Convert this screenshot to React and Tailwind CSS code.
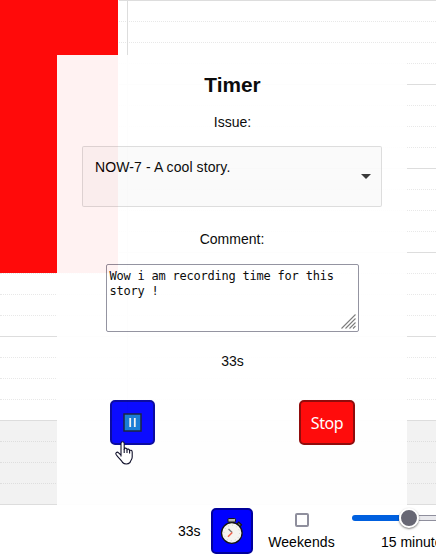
const quarterHours = Array.from({ length: 24 }, (_, i) => i);

function Calendar() {
  return (
    <div className="relative h-[505px] shrink-0 bg-white">
      {quarterHours.map((i) => (
        <div
          key={i}
          className={`h-[21px] border-t ${i % 4 === 0 ? "border-solid border-[#dddddd]" : i > 20 ? "border-dotted border-[#dedede]" : "border-dotted border-[#e8e8e8]"} ${i >= 20 ? "bg-[#f2f2f2]" : ""}`}
        />
      ))}
      <div className="h-px bg-[#dddddd]" />
      <div className="absolute top-0 left-[127px] h-[420px] w-px bg-[#dddddd]" />
      <div className="absolute top-0 left-0 h-[273px] w-[119px] border-r border-white bg-[#ff0a0a]" />
    </div>
  );
}

function Hand() {
  return (
    <svg className="absolute top-[440px] left-[114px]" width="20" height="26" viewBox="0 0 20 26">
      <path
        d="M7 16.5V3.5C7 1.1 10.2 1.1 10.2 3.5V9.2C10.5 7.6 13 7.8 13 9.8C13.4 8.5 15.6 8.9 15.6 10.8C16.2 9.8 18.2 10.2 18.2 12V17C18.2 19.5 16.6 20.3 16 22.5C14 24.4 10.5 24.4 8.6 22.5C7.8 20.5 4.2 18 2.1 14.5C1 12.5 3.2 11.5 4.6 12.8L7 15.2"
        fill="white"
        stroke="#10102a"
        strokeWidth="1.1"
        strokeLinejoin="round"
      />
      <path d="M10.2 9V13M13 10V13M15.6 11V13.5" stroke="#10102a" strokeWidth="1.1" />
    </svg>
  );
}

function TimerDialog() {
  return (
    <div className="absolute top-[55px] left-[57px] flex h-[450px] w-[350px] flex-col items-center bg-white text-black opacity-95">
      <h1 className="mt-[17px] ml-px text-[20.8px] leading-[26px] font-bold">Timer</h1>
      <div className="mt-[15px] ml-px text-sm leading-[18px]">Issue:</div>
      <div className="mt-[15px] flex h-[61px] w-[300px] justify-between rounded-[2px] border border-black/12 bg-black/2 pt-[11px] pr-[10px] pl-[12px] text-sm leading-[18px]">
        <span className="tracking-[0.1px]">NOW-7 - A cool story.</span>
        <svg className="mt-[16px]" width="10" height="5" viewBox="0 0 10 5">
          <path d="M0 0H10L5 5Z" fill="#303030" />
        </svg>
      </div>
      <div className="mt-[23px] text-sm leading-[18px]">Comment:</div>
      <div className="relative mt-[16px] h-[68px] w-[253px] rounded-[2px] border border-[#8f8f9d] bg-white px-[3px] pt-[4px] font-['DejaVu_Sans_Mono',monospace] text-[12px] leading-[15px] tracking-[-0.22px] whitespace-nowrap">
        Wow i am recording time for this
        <br />
        story !
        <svg className="absolute right-[2px] bottom-[2px]" width="15" height="15" viewBox="0 0 15 15">
          <path d="M0.5 14.5L14.5 0.5M4.5 14.5L14.5 4.5M8.5 14.5L14.5 8.5M12 14.5L14.5 12" stroke="#777" strokeWidth="1.1" />
        </svg>
      </div>
      <div className="mt-[20px] ml-px text-sm leading-[18px]">33s</div>
      <div className="mt-[30px] flex w-full justify-between pr-[52px] pl-[53px]">
        <button className="flex h-[45px] w-[45px] items-center justify-center rounded-[5px] border-2 border-[#00009b] bg-[#0000ff]">
          <svg width="19" height="19" viewBox="0 0 19 19">
            <rect x="1" y="1" width="17" height="17" fill="#0f78d4" stroke="#101a38" strokeWidth="1.5" />
            <path d="M7.2 5V14M11.8 5V14" stroke="#f2f2f2" strokeWidth="1.8" />
          </svg>
        </button>
        <button className="h-[45px] w-[56px] rounded-[5px] border-2 border-[#8b0000] bg-[#ff0000] font-['Noto_Sans',sans-serif] text-[16px] tracking-[-0.4px] text-white">
          Stop
        </button>
      </div>
    </div>
  );
}

function Stopwatch() {
  return (
    <svg width="24" height="28" viewBox="0 0 24 28">
      <rect x="9.5" y="4" width="4" height="4" fill="#999" stroke="#151515" strokeWidth="1" />
      <rect x="8" y="1.5" width="7.5" height="3.5" rx="0.8" fill="#b5b5b5" stroke="#151515" strokeWidth="1" />
      <path d="M17 7L18.8 5.2L21.5 7.8L19.8 9.8" fill="#777" stroke="#151515" strokeWidth="1.2" />
      <circle cx="11.8" cy="16" r="10.3" fill="#f4f4f0" stroke="#151515" strokeWidth="1.3" />
      <circle cx="11.8" cy="16" r="7.8" fill="none" stroke="#cfcfcb" strokeWidth="1" strokeDasharray="1 3.08" />
      <path d="M8.5 12L12.2 15.5" stroke="#777" strokeWidth="1.3" />
      <path d="M12.2 15.5L8 19.8" stroke="#f0604a" strokeWidth="1.5" />
    </svg>
  );
}

function Footer() {
  return (
    <div className="relative flex h-[52px] bg-white text-sm text-black">
      <span className="mt-[17px] ml-[178px] w-[33px] leading-[18px]">33s</span>
      <button className="mt-[3px] flex h-[46px] w-[42px] items-center justify-center rounded-[5px] border-2 border-[#00009b] bg-[#0000ff]">
        <Stopwatch />
      </button>
      <label className="ml-[15px] flex w-[67px] flex-col items-center">
        <span className="mt-[8px] h-[14px] w-[14px] rounded-[2px] border-2 border-[#8f8f9d] bg-white" />
        <span className="mt-[6px] leading-[18px] tracking-[0.1px]">Weekends</span>
      </label>
      <div className="ml-[17px] w-[84px] shrink-0 overflow-hidden">
        <div className="mt-[2px] flex h-[22px] items-center">
          <div className="h-[6px] w-[47px] rounded-l-[3px] bg-[#0060df]" />
          <div className="z-10 h-[20px] w-[20px] shrink-0 rounded-full border-2 border-white bg-[#676774] shadow-[0_1px_2px_rgba(0,0,0,0.5)]" />
          <div className="h-[6px] flex-1 border-y border-[#8f8f9d] bg-[#e9e9ed]" />
        </div>
        <div className="mt-[4px] ml-[29px] leading-[18px] whitespace-nowrap">15 minutes</div>
      </div>
    </div>
  );
}

export default function App() {
  return (
    <main className="relative flex h-[557px] w-[436px] flex-col overflow-hidden bg-white font-['Liberation_Sans',Arial,sans-serif]">
      <Calendar />
      <TimerDialog />
      <Footer />
      <Hand />
    </main>
  );
}
